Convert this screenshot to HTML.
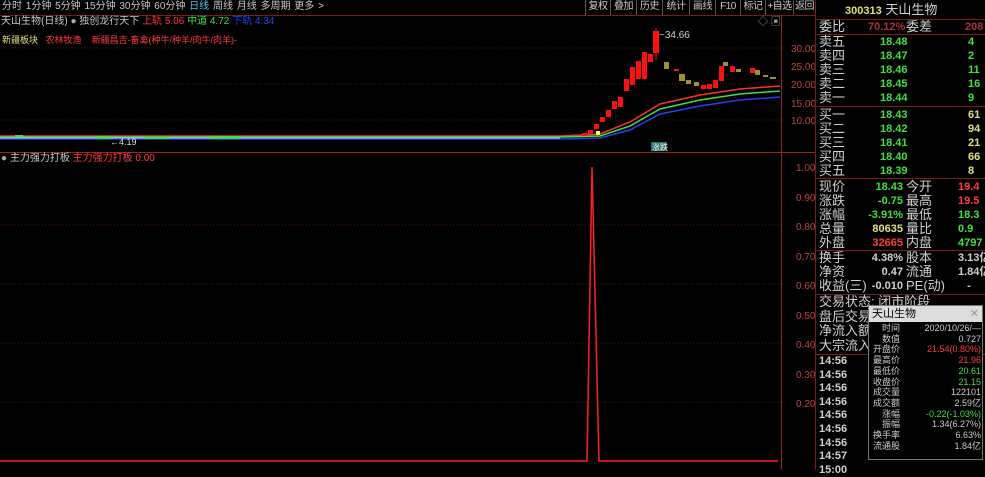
<!DOCTYPE html>
<html><head><meta charset="utf-8"><style>
*{margin:0;padding:0;box-sizing:border-box}
body{width:985px;height:470px;background:#000;overflow:hidden;position:relative;font-family:"Liberation Sans","Noto Sans CJK SC",sans-serif;font-size:11px;color:#c8c8c8}
.a{position:absolute;white-space:nowrap;line-height:14px}
.w{color:#d0d0d0}.r{color:#ff3b3b}.g{color:#40e040}.y{color:#e0e080}.dr{color:#b03030}
.num{font-weight:bold;font-size:11px !important}
.tb{position:absolute;top:0;height:15px;border-left:1px solid #555;color:#ccc;font-size:10px;line-height:14px;text-align:center;overflow:hidden;white-space:nowrap;letter-spacing:-0.5px}
</style></head><body>
<div class="a" style="left:2px;top:0;font-size:10px;word-spacing:1px">分时 1分钟 5分钟 15分钟 30分钟 60分钟 <span style="color:#4ac8e8">日线</span> 周线 月线 多周期 更多 &gt;</div>
<div class="tb" style="left:585px;width:25px">复权</div>
<div class="tb" style="left:610px;width:26px">叠加</div>
<div class="tb" style="left:636px;width:26px">历史</div>
<div class="tb" style="left:662px;width:27px">统计</div>
<div class="tb" style="left:689px;width:26px">画线</div>
<div class="tb" style="left:715px;width:25px">F10</div>
<div class="tb" style="left:740px;width:25px">标记</div>
<div class="tb" style="left:765px;width:28px">+自选</div>
<div class="tb" style="left:793px;width:22px">返回</div>
<div style="position:absolute;left:0;top:15px;width:815px;height:1px;background:#7a1a1a"></div>
<div class="a" style="left:1px;top:15px;font-size:10px">天山生物(日线) <span style="color:#aaa">●</span> 独创龙行天下 <span class="r">上轨 5.06</span> <span class="g">中道 4.72</span> <span style="color:#2040ff">下轨 4.34</span></div>
<div class="a" style="left:2px;top:33px;font-size:9px"><span class="y">新疆板块</span>&nbsp;&nbsp;&nbsp;<span class="r">农林牧渔</span>&nbsp;&nbsp;&nbsp;&nbsp;<span class="r">新疆昌吉-畜禽(种牛/种羊/肉牛/肉羊)-</span></div>
<div class="a" style="left:758px;top:16px;color:#999;font-size:10px">◇ ▣</div>

<svg style="position:absolute;left:0;top:0" width="815" height="470">
 <g stroke="#5a1515" stroke-dasharray="1 2">
  <line x1="0" y1="48" x2="781" y2="48"/><line x1="0" y1="84" x2="781" y2="84"/><line x1="0" y1="120" x2="781" y2="120"/>
  <line x1="0" y1="225" x2="781" y2="225"/><line x1="0" y1="284" x2="781" y2="284"/><line x1="0" y1="343" x2="781" y2="343"/><line x1="0" y1="402" x2="781" y2="402"/>
 </g>
 <line x1="781.5" y1="16" x2="781.5" y2="470" stroke="#a02020"/>
 <line x1="0" y1="152.5" x2="815" y2="152.5" stroke="#a02020"/>
 <polyline fill="none" stroke="#ff3030" stroke-width="1.5" points="0,136 560,136 600,134 630,122 660,104 700,95 740,89 780,86"/>
 <polyline fill="none" stroke="#40e040" stroke-width="1.5" points="0,137 560,137 600,136 630,126 660,109 700,100 740,94 780,91"/>
 <polyline fill="none" stroke="#2040ff" stroke-width="1.5" points="0,139 560,139 600,138 630,130 660,114 700,106 740,100 780,97"/>
 <polyline fill="none" stroke="#c0c0ff" stroke-width="1" points="0,138 560,138"/>
 <g fill="#40e040"><rect x="15" y="135" width="8" height="2"/><rect x="95" y="136" width="15" height="3"/><rect x="145" y="137" width="25" height="2"/><rect x="210" y="136" width="30" height="3"/></g>
 <text x="110" y="145" fill="#ddd" font-size="9" font-family="Liberation Sans">←4.19</text>
 <g fill="#ff1010">
  <rect x="582" y="133" width="5" height="3"/><rect x="588" y="130" width="5" height="4"/><rect x="594" y="124" width="5" height="5"/>
  <rect x="600" y="117" width="5" height="5"/><rect x="606" y="110" width="5" height="7"/><rect x="612" y="101" width="5" height="8"/>
  <rect x="618" y="97" width="5" height="10"/><rect x="624" y="79" width="5" height="12"/><rect x="630" y="67" width="5" height="18"/>
  <rect x="636" y="61" width="5" height="18"/><rect x="642" y="52" width="5" height="27"/><rect x="648" y="54" width="5" height="8"/>
  <rect x="653" y="31" width="6" height="22"/>
  <rect x="674" y="69" width="5" height="2"/><rect x="701" y="85" width="5" height="4"/><rect x="707" y="84" width="5" height="5"/>
  <rect x="713" y="80" width="5" height="8"/><rect x="719" y="66" width="5" height="15"/><rect x="730" y="66" width="5" height="6"/>
  <rect x="750" y="68" width="5" height="5"/>
 </g>
 <rect x="596" y="131" width="4" height="4" fill="#ffff40"/>
 <g fill="#a09030">
  <rect x="664" y="62" width="5" height="7"/><rect x="679" y="74" width="6" height="7"/><rect x="686" y="80" width="5" height="4"/>
  <rect x="694" y="82" width="5" height="4"/><rect x="723" y="62" width="5" height="4"/><rect x="736" y="69" width="5" height="3"/>
  <rect x="755" y="70" width="5" height="5"/><rect x="763" y="75" width="5" height="2"/><rect x="770" y="77" width="6" height="2"/>
 </g>
 <line x1="656" y1="28" x2="656" y2="60" stroke="#ff1010"/>
 <text x="659" y="38" fill="#ccc" font-size="10" font-family="Liberation Sans">~34.66</text>
 <rect x="651" y="142" width="16" height="9" fill="#2a6a6a"/>
 <text x="652" y="150" fill="#fff" font-size="8" font-family="Noto Sans CJK SC">涨跌</text>
 <g fill="#c04040" font-size="10" font-family="Liberation Sans">
  <text x="791" y="52">30.00</text><text x="791" y="70">25.00</text><text x="791" y="88">20.00</text><text x="791" y="107">15.00</text><text x="791" y="124">10.00</text>
  <text x="796" y="171">1.00</text><text x="796" y="201">0.90</text><text x="796" y="230">0.80</text><text x="796" y="260">0.70</text><text x="796" y="289">0.60</text>
  <text x="796" y="319">0.50</text><text x="796" y="348">0.40</text><text x="796" y="378">0.30</text><text x="796" y="407">0.20</text>
 </g>
 <polyline fill="none" stroke="#ff2020" stroke-width="1.5" points="0,461 587,461 592,167 599,461 778,461"/>
</svg>
<div class="a" style="left:1px;top:152px;font-size:10px"><span style="color:#aaa">●</span> 主力强力打板 <span class="r">主力强力打板 0.00</span></div>

<div style="position:absolute;left:815px;top:0;width:1px;height:470px;background:#7a1a1a"></div>
<div class="a" style="left:845px;top:3px;font-size:13px"><b class="y" style="font-size:11px">300313</b> <span class="w">天山生物</span></div>
<div style="position:absolute;left:815px;top:19px;width:170px;height:1px;background:#7a1a1a"></div>
<div class="a w" style="left:819px;top:20px;font-size:13px">委比</div><div class="a num dr" style="left:868px;top:20px">70.12%</div><div class="a w" style="left:906px;top:20px;font-size:13px">委差</div><div class="a num dr" style="left:965px;top:20px">208</div>
<div style="position:absolute;left:815px;top:34px;width:170px;height:1px;background:#7a1a1a"></div>
<div class="a w" style="left:819px;top:35px;font-size:13px;line-height:14px">卖五<br>卖四<br>卖三<br>卖二<br>卖一</div>
<div class="a num g" style="left:880px;top:35px;line-height:14px">18.48<br>18.47<br>18.46<br>18.45<br>18.44</div>
<div class="a num g" style="left:968px;top:35px;line-height:14px;width:17px">4<br>2<br>11<br>16<br>9</div>
<div style="position:absolute;left:815px;top:106px;width:170px;height:1px;background:#7a1a1a"></div>
<div class="a w" style="left:819px;top:108px;font-size:13px;line-height:14px">买一<br>买二<br>买三<br>买四<br>买五</div>
<div class="a num g" style="left:880px;top:108px;line-height:14px">18.43<br>18.42<br>18.41<br>18.40<br>18.39</div>
<div class="a num y" style="left:968px;top:108px;line-height:14px;width:17px">61<br>94<br>21<br>66<br>8</div>
<div style="position:absolute;left:815px;top:178px;width:170px;height:1px;background:#7a1a1a"></div>
<div class="a w" style="left:819px;top:180px;font-size:13px;line-height:14px">现价<br>涨跌<br>涨幅<br>总量<br>外盘</div>
<div class="a num" style="left:843px;top:180px;line-height:14px;width:60px;text-align:right"><span class="g">18.43</span><br><span class="g">-0.75</span><br><span class="g">-3.91%</span><br><span class="y">80635</span><br><span class="r">32665</span></div>
<div class="a w" style="left:906px;top:180px;font-size:13px;line-height:14px">今开<br>最高<br>最低<br>量比<br>内盘</div>
<div class="a num" style="left:958px;top:180px;line-height:14px"><span class="r">19.4</span><br><span class="r">19.5</span><br><span class="g">18.3</span><br><span class="g">0.9</span><br><span class="g">4797</span></div>
<div style="position:absolute;left:815px;top:250px;width:170px;height:1px;background:#7a1a1a"></div>
<div class="a w" style="left:819px;top:251px;font-size:13px;line-height:14px">换手<br>净资<br>收益(三)</div>
<div class="a num w" style="left:843px;top:251px;line-height:14px;width:60px;text-align:right">4.38%<br>0.47<br>-0.010</div>
<div class="a w" style="left:906px;top:251px;font-size:13px;line-height:14px">股本<br>流通<br>PE(动)</div>
<div class="a num w" style="left:958px;top:251px;line-height:14px">3.13亿<br>1.84亿<br>&nbsp;&nbsp;&nbsp;-</div>
<div style="position:absolute;left:815px;top:294px;width:170px;height:1px;background:#7a1a1a"></div>
<div class="a w" style="left:819px;top:295px;font-size:13px;line-height:14.5px">交易状态: 闭市阶段<br>盘后交易<br>净流入额<br>大宗流入</div>
<div style="position:absolute;left:815px;top:354px;width:170px;height:1px;background:#7a1a1a"></div>
<div class="a num w" style="left:819px;top:355px;line-height:13.6px;font-size:11px !important">14:56<br>14:56<br>14:56<br>14:56<br>14:56<br>14:56<br>14:56<br>14:57<br>15:00</div>
<div style="position:absolute;left:868px;top:305px;width:115px;height:155px;background:#000;border:1px solid #777"></div>
<div style="position:absolute;left:869px;top:306px;width:113px;height:16px;background:#dcdcdc;color:#000;font-size:11px;line-height:16px;padding-left:3px">天山生物<span style="position:absolute;right:3px;color:#999">✕</span></div>
<div class="a" style="left:872px;top:323px;font-size:9px;line-height:10.7px;color:#ccc;text-align:right;width:28px">时间<br>数值<br>开盘价<br>最高价<br>最低价<br>收盘价<br>成交量<br>成交额<br>涨幅<br>振幅<br>换手率<br>流通股</div>
<div class="a" style="left:900px;top:323px;font-size:9px;line-height:10.7px;text-align:right;width:81px;color:#ccc">2020/10/26/—<br>0.727<br><span class="r">21.54(0.80%)</span><br><span class="r">21.96</span><br><span class="g">20.61</span><br><span class="g">21.15</span><br>122101<br>2.59亿<br><span class="g">-0.22(-1.03%)</span><br>1.34(6.27%)<br>6.63%<br>1.84亿</div>
</body></html>
